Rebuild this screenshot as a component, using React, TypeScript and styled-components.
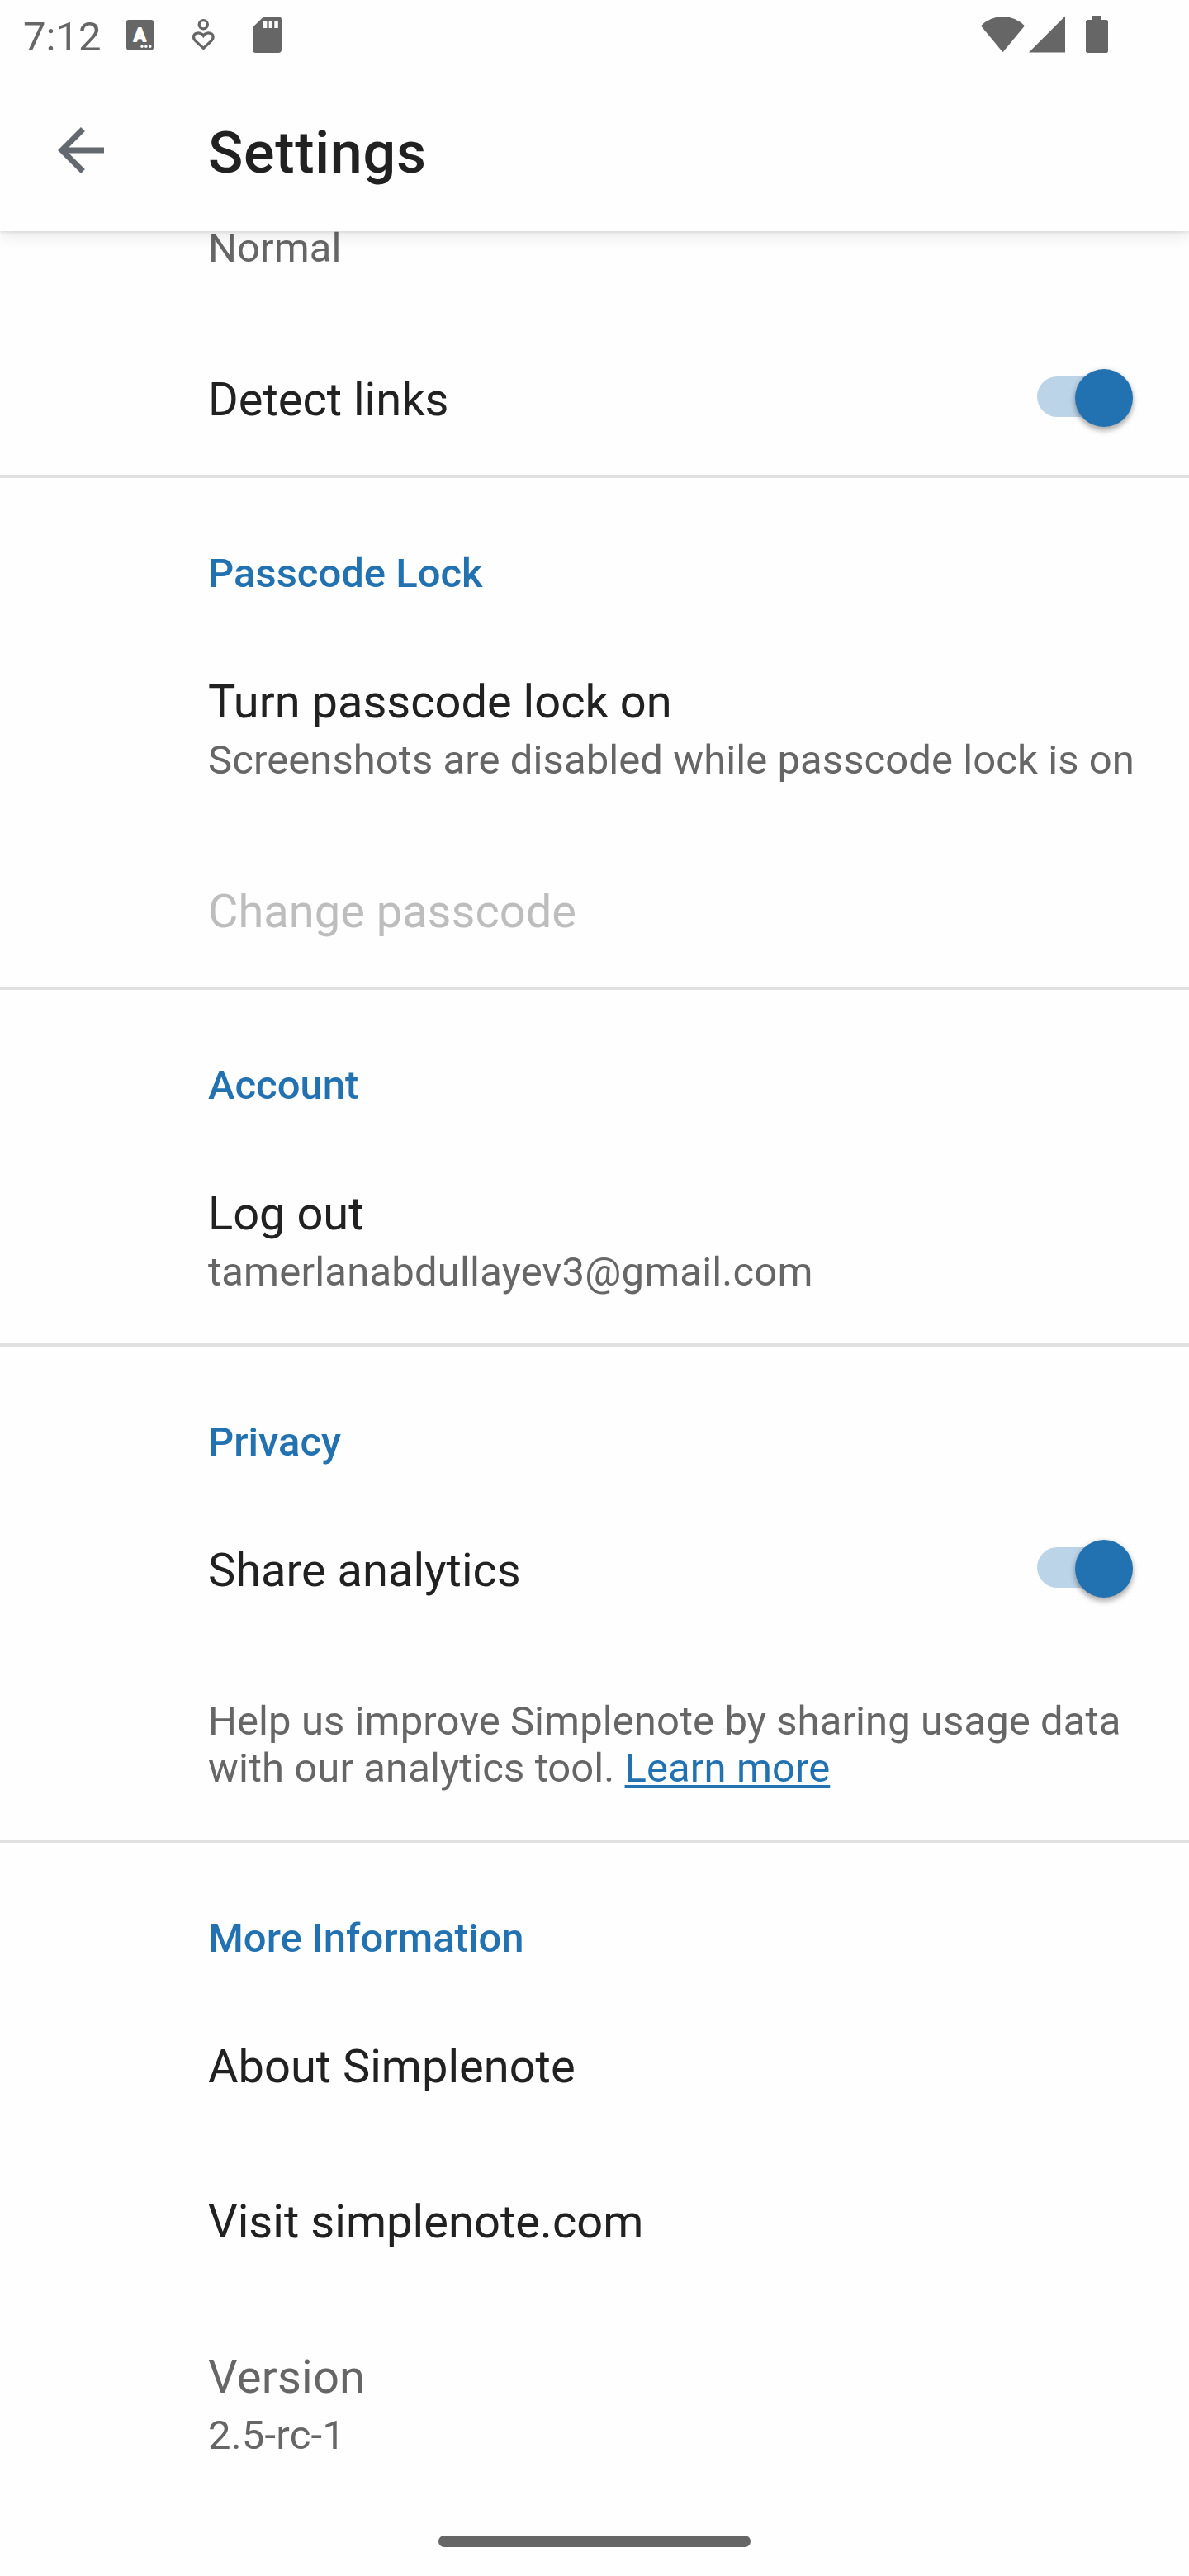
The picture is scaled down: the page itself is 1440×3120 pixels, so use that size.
import React from "react";
import styled, { createGlobalStyle } from "styled-components";

const blue = "#2271b1";
const grey = "#666666";

const GlobalStyle = createGlobalStyle`
  html, body { margin: 0; padding: 0; background: #fefefe; }
  body { font-family: Roboto, "Noto Sans", sans-serif; }
`;

const Screen = styled.div`
  display: flex;
  flex-direction: column;
  width: 1440px;
  height: 3120px;
  background: #fefefe;
  overflow: hidden;
`;

const Header = styled.header`
  flex: none;
  position: relative;
  z-index: 1;
  background: #fefefe;
  box-shadow: 0 2px 3px rgba(0, 0, 0, 0.08), 0 6px 18px rgba(0, 0, 0, 0.09);
`;

const StatusBar = styled.div`
  display: flex;
  align-items: flex-start;
  height: 84px;
  box-sizing: border-box;
  padding: 0 98px 0 28px;
  color: ${grey};
`;

const Clock = styled.time`
  width: 125px;
  font-size: 49px;
  line-height: 89px;
  white-space: nowrap;
`;

const StatusIcon = styled.svg<{ $w: number; $gap?: number }>`
  display: block;
  flex: none;
  width: ${(p) => p.$w}px;
  height: 84px;
  margin-left: ${(p) => p.$gap ?? 0}px;
  fill: currentColor;
`;

const Spacer = styled.div`
  flex: 1;
`;

const Toolbar = styled.div`
  display: flex;
  align-items: center;
  height: 196px;
  padding-left: 56px;
`;

const BackButton = styled.button`
  width: 84px;
  height: 84px;
  padding: 0;
  border: 0;
  background: none;
  color: #646970;
  svg { display: block; fill: currentColor; }
`;

const PageTitle = styled.h1`
  margin: 6px 0 0 112px;
  font-size: 70px;
  font-weight: 500;
  line-height: 82px;
  letter-spacing: 0.01em;
  color: #212121;
`;

const List = styled.main`
  flex: 1;
`;

const Section = styled.section`
  & + & {
    box-shadow: inset 0 4px 0 #e0e0e0;
  }
`;

const Category = styled.h2`
  margin: 0;
  height: 178px;
  box-sizing: border-box;
  padding: 91px 0 0 252px;
  font-size: 49px;
  font-weight: 500;
  line-height: 57px;
  color: ${blue};
`;

const Row = styled.div<{ $h: number }>`
  display: flex;
  justify-content: space-between;
  height: ${(p) => p.$h}px;
  box-sizing: border-box;
  padding: 56px 56px 0 252px;
`;

const ClippedRow = styled(Row)`
  padding-top: 0;
`;

const Title = styled.div<{ $color?: string; $tracking?: number }>`
  padding-top: 8px;
  font-size: 56px;
  line-height: 66px;
  letter-spacing: ${(p) => p.$tracking ?? 0}px;
  white-space: nowrap;
  color: ${(p) => p.$color ?? "#212121"};
`;

const Summary = styled.div<{ $tracking?: number }>`
  font-size: 49px;
  line-height: 57px;
  letter-spacing: ${(p) => p.$tracking ?? 0.08}px;
  white-space: nowrap;
  color: ${grey};
`;

const RowSummary = styled(Summary)`
  margin-top: 9px;
`;

const ClippedSummary = styled(Summary)`
  margin-top: -8px;
`;

const HelpText = styled(Summary)`
  padding-top: 7px;
`;

const Link = styled.a`
  color: ${blue};
  text-decoration: underline;
  text-decoration-thickness: 3px;
  text-underline-offset: 4px;
  text-decoration-skip-ink: none;
`;

const Track = styled.div`
  display: flex;
  align-items: center;
  justify-content: flex-end;
  width: 109px;
  height: 49px;
  margin: 13px 19px 0 0;
  border-radius: 25px;
  background: #bcd4e8;
`;

const Thumb = styled.div`
  flex: none;
  width: 70px;
  height: 70px;
  margin-right: -7px;
  margin-top: 2px;
  border-radius: 50%;
  background: ${blue};
  box-shadow: 0 5px 6px rgba(0, 0, 0, 0.25), 0 1px 7px rgba(0, 0, 0, 0.15);
`;

const NavBar = styled.footer`
  display: flex;
  justify-content: center;
  flex: none;
  height: 49px;
`;

const Handle = styled.div`
  width: 378px;
  height: 14px;
  border-radius: 7px;
  background: ${grey};
`;

const BadgeLetter = styled.text`
  font: 500 22px Roboto, sans-serif;
  fill: #fefefe;
  stroke: #fefefe;
  stroke-width: 2.2px;
  stroke-linejoin: round;
`;

function Switch() {
  return (
    <Track role="switch" aria-checked="true">
      <Thumb />
    </Track>
  );
}

type ItemProps = {
  title: string;
  summary?: string;
  color?: string;
  titleTracking?: number;
  summaryTracking?: number;
};

function Item({ title, summary, color, titleTracking, summaryTracking }: ItemProps) {
  return (
    <Row $h={summary ? 254 : 188}>
      <div>
        <Title $color={color} $tracking={titleTracking}>{title}</Title>
        {summary && <RowSummary $tracking={summaryTracking}>{summary}</RowSummary>}
      </div>
    </Row>
  );
}

function SwitchItem({ title }: { title: string }) {
  return (
    <Row $h={188}>
      <Title>{title}</Title>
      <Switch />
    </Row>
  );
}

export default function App() {
  return (
    <>
      <GlobalStyle />
      <Screen>
        <Header>
          <StatusBar>
            <Clock>7:12</Clock>
            <StatusIcon $w={33} viewBox="153 0 33 84">
              <rect x="153" y="24" width="33" height="36.6" rx="3" />
              <BadgeLetter x="169.4" y="50" textAnchor="middle">A</BadgeLetter>
              <g fill="#fefefe">
                <circle cx="172" cy="56.3" r="1.7" />
                <circle cx="176.8" cy="56.3" r="1.7" />
                <circle cx="181.8" cy="56.3" r="1.7" />
              </g>
            </StatusIcon>
            <StatusIcon $w={28} $gap={46} viewBox="232 0 28 84">
              <g fill="none" stroke="currentColor" strokeWidth="3.3">
                <circle cx="246.3" cy="29.8" r="5.1" />
                <path d="M246.3 58.4L236.4 49.2C233.6 46.2 234 41.8 237.4 40.5C240.8 39.2 244.4 40.4 246.3 43.2C248.2 40.4 251.8 39.2 255.2 40.5C258.6 41.8 259 46.2 256.2 49.2Z" />
              </g>
            </StatusIcon>
            <StatusIcon $w={35} $gap={46} viewBox="306 0 35 84">
              <path
                fillRule="evenodd"
                d="M319.5 20H337A4 4 0 0 1 341 24V60A4 4 0 0 1 337 64H310A4 4 0 0 1 306 60V33ZM319 25V34H323.3V25ZM325.6 25V34H330V25ZM332.3 25V34H336.8V25Z"
              />
            </StatusIcon>
            <Spacer />
            <StatusIcon $w={53} viewBox="1188 0 53 84">
              <path d="M1188 31.3A37 37 0 0 1 1241 31.3L1214.5 63.3Z" />
            </StatusIcon>
            <StatusIcon $w={44} $gap={5} viewBox="1246 0 44 84">
              <path d="M1246 63.4H1290V19.4Z" />
            </StatusIcon>
            <StatusIcon $w={27} $gap={25} viewBox="1315 0 27 84">
              <path d="M1323 19H1334V24H1340.5L1342 25.5V62.5L1340.5 64H1316.5L1315 62.5V25.5L1316.5 24H1323Z" />
            </StatusIcon>
          </StatusBar>
          <Toolbar>
            <BackButton aria-label="Back">
              <svg width="84" height="84" viewBox="0 0 24 24">
                <path d="M20 11H7.83l5.59-5.59L12 4l-8 8 8 8 1.41-1.41L7.83 13H20v-2z" />
              </svg>
            </BackButton>
            <PageTitle>Settings</PageTitle>
          </Toolbar>
        </Header>
        <List>
          <Section>
            <ClippedRow $h={107}>
              <ClippedSummary>Normal</ClippedSummary>
            </ClippedRow>
            <SwitchItem title="Detect links" />
          </Section>
          <Section>
            <Category>Passcode Lock</Category>
            <Item title="Turn passcode lock on" summary="Screenshots are disabled while passcode lock is on" />
            <Item title="Change passcode" color="#bdbdbd" />
          </Section>
          <Section>
            <Category>Account</Category>
            <Item title="Log out" summary="tamerlanabdullayev3@gmail.com" summaryTracking={0.19} />
          </Section>
          <Section>
            <Category>Privacy</Category>
            <SwitchItem title="Share analytics" />
            <Row $h={235}>
              <HelpText>
                Help us improve Simplenote by sharing usage data
                <br />
                with our analytics tool. <Link>Learn more</Link>
              </HelpText>
            </Row>
          </Section>
          <Section>
            <Category>More Information</Category>
            <Item title="About Simplenote" />
            <Item title="Visit simplenote.com" titleTracking={0.05} />
            <Item title="Version" summary="2.5-rc-1" color={grey} titleTracking={0.25} summaryTracking={0.2} />
          </Section>
        </List>
        <NavBar>
          <Handle />
        </NavBar>
      </Screen>
    </>
  );
}
